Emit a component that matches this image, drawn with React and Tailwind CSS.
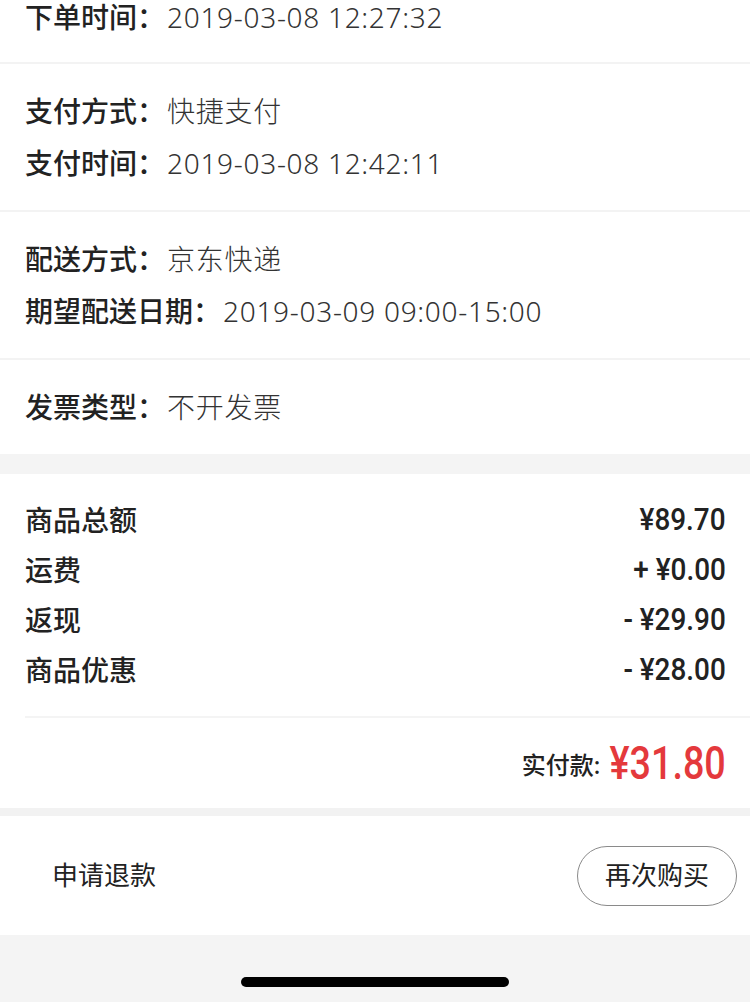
const font = { fontFamily: '"Noto Sans", "Noto Sans CJK SC", sans-serif' };

function InfoRow({ label, value, h = "h-[52px]" }) {
  return (
    <div className={"flex items-center text-[28px] leading-[30px] " + h}>
      <span className="font-medium text-[#222]">{label}：</span>
      <span className="text-[#333] font-light tracking-[0.7px] ml-[2px]">{value}</span>
    </div>
  );
}

function InfoSection({ rows }) {
  return (
    <div className="px-[25px] py-[21px] border-b-2 border-[#f3f3f3]">
      {rows.map((r) => (
        <InfoRow key={r.label} label={r.label} value={r.value} />
      ))}
    </div>
  );
}

function PriceRow({ label, value }) {
  return (
    <div className="flex items-center justify-between h-[50px]">
      <span className="text-[28px] font-medium text-[#222]">{label}</span>
      <span className="inline-block origin-right scale-x-[0.9] text-[31px] font-medium text-[#222] font-['Roboto','Noto_Sans_CJK_SC',sans-serif]">
        {value}
      </span>
    </div>
  );
}

export default function App() {
  const prices = [
    { label: "商品总额", value: "¥89.70" },
    { label: "运费", value: "+ ¥0.00" },
    { label: "返现", value: "- ¥29.90" },
    { label: "商品优惠", value: "- ¥28.00" },
  ];

  return (
    <div className="w-[750px] h-[1002px] overflow-hidden bg-white" style={font}>
      <div className="px-[25px] pb-[28px] border-b-2 border-[#f3f3f3]">
        <InfoRow label="下单时间" value="2019-03-08 12:27:32" h="h-[34px]" />
      </div>
      <InfoSection
        rows={[
          { label: "支付方式", value: "快捷支付" },
          { label: "支付时间", value: "2019-03-08 12:42:11" },
        ]}
      />
      <InfoSection
        rows={[
          { label: "配送方式", value: "京东快递" },
          { label: "期望配送日期", value: "2019-03-09 09:00-15:00" },
        ]}
      />
      <div className="px-[25px] py-[21px]">
        <InfoRow label="发票类型" value="不开发票" />
      </div>

      <div className="h-[20px] bg-[#f4f4f4]" />

      <div className="pl-[25px]">
        <div className="pr-[24px] py-[21px] border-b-2 border-[#f4f4f4]">
          {prices.map((p) => (
            <PriceRow key={p.label} label={p.label} value={p.value} />
          ))}
        </div>
        <div className="pr-[24px] h-[90px] flex items-center justify-end">
          <span className="text-[24px] font-medium text-[#222] mt-[4px] -mr-[16px]">实付款:</span>
          <span className="inline-block origin-right scale-x-[0.82] text-[46px] font-medium text-[#e4393c] font-['Roboto','Noto_Sans_CJK_SC',sans-serif]">
            ¥31.80
          </span>
        </div>
      </div>

      <div className="h-[8px] bg-[#f2f2f2]" />

      <div className="h-[119px] flex items-center justify-between pl-[52px] pr-[13px]">
        <span className="text-[26px] text-[#222]">申请退款</span>
        <button className="w-[160px] h-[60px] rounded-full border border-[#8a8a8a] text-[26px] text-[#222] bg-white">
          再次购买
        </button>
      </div>

      <div className="h-[67px] bg-[#f4f4f4] pt-[42px]">
        <div className="w-[268px] h-[10px] rounded-full bg-black mx-auto" />
      </div>
    </div>
  );
}
